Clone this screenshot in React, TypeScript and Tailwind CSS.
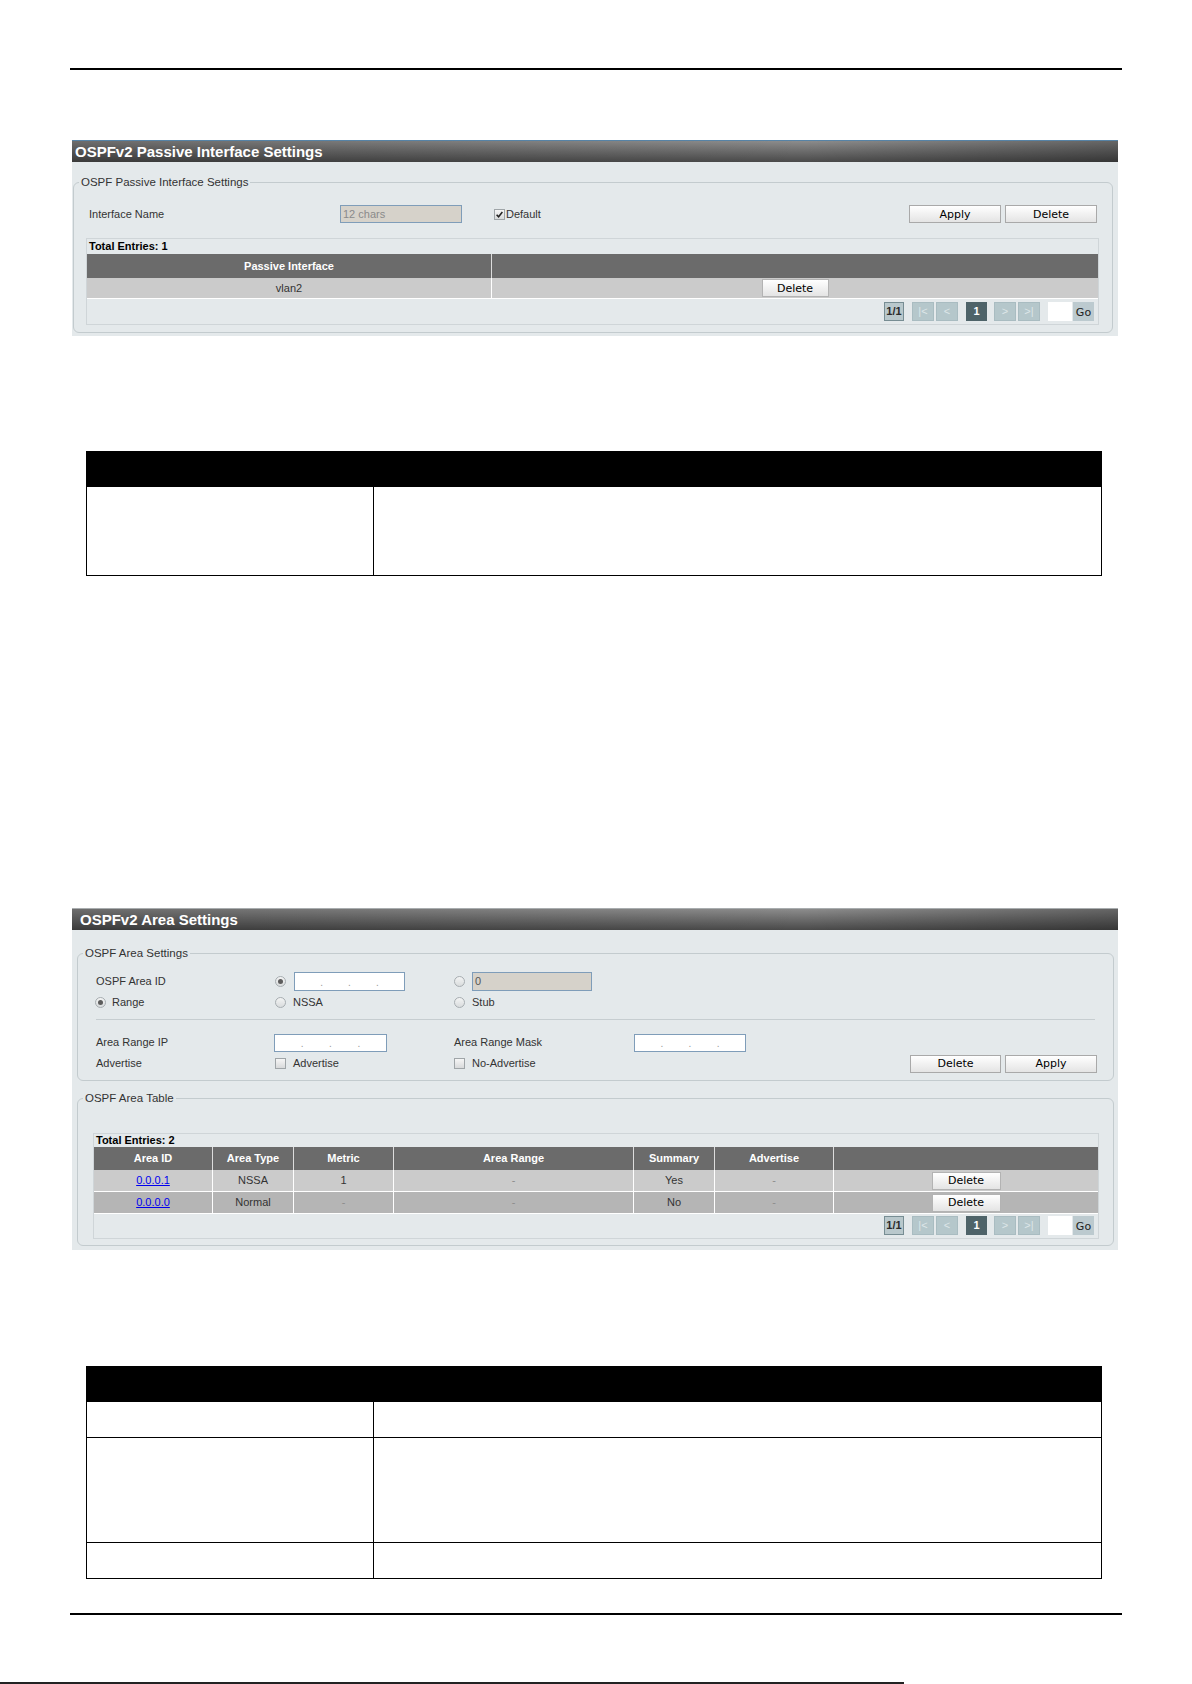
import React from 'react';
import clsx from 'clsx';

const PANEL_BG = 'bg-[#e4e9eb]';

function TitleBar({ title, accent, pad }: { title: string; accent: string; pad: string }) {
  return (
    <div
      className={clsx(
        'h-[22px] border-t text-[15px] font-bold leading-[21px] text-white',
        'bg-[linear-gradient(to_right,rgba(0,0,0,0.22),rgba(0,0,0,0.08)_45%,rgba(0,0,0,0)_70%,rgba(0,0,0,0.28)),linear-gradient(to_bottom,#8c8c8c,#4a4a4a)]',
        accent,
        pad
      )}
    >
      {title}
    </div>
  );
}

function Fieldset({
  legend,
  className,
  children,
}: {
  legend: string;
  className?: string;
  children: React.ReactNode;
}) {
  return (
    <div className={clsx('relative rounded-[6px] border border-[#c3cbce]', className)}>
      <span
        className={clsx(
          'absolute -top-[8px] left-[5px] px-[2px] text-[11.5px] leading-[14px] text-[#333]',
          PANEL_BG
        )}
      >
        {legend}
      </span>
      {children}
    </div>
  );
}

function Btn({ children, className }: { children: React.ReactNode; className?: string }) {
  return (
    <button
      type="button"
      className={clsx(
        "flex h-[18px] items-center justify-center border border-[#a9a9a9] bg-gradient-to-b from-white to-[#e4e4e4] font-['DejaVu_Sans',Verdana,sans-serif] text-[11px] leading-none text-black",
        className
      )}
    >
      {children}
    </button>
  );
}

function Radio({ checked }: { checked?: boolean }) {
  return (
    <span className="flex h-[11px] w-[11px] shrink-0 items-center justify-center rounded-full border border-[#a7adb1] bg-gradient-to-b from-[#f3f4f4] to-[#d9dcdd]">
      {checked && <span className="h-[5px] w-[5px] rounded-full bg-[#5c5c5c]" />}
    </span>
  );
}

function Check({ checked }: { checked?: boolean }) {
  return (
    <span className="flex h-[11px] w-[11px] shrink-0 items-center justify-center border border-[#9fa5a8] bg-gradient-to-b from-[#f6f6f6] to-[#d8dadb]">
      {checked && (
        <svg viewBox="0 0 10 10" className="h-[9px] w-[9px]">
          <path d="M1.8 5.2 L4 7.6 L8.2 2.2" stroke="#222" strokeWidth="1.7" fill="none" />
        </svg>
      )}
    </span>
  );
}

function IpInput({ className }: { className?: string }) {
  return (
    <div
      className={clsx(
        'flex items-center justify-evenly border border-[#7f9db9] bg-white pt-[3px] text-[10px] leading-none text-[#9a9a9a]',
        className
      )}
    >
      <span>.</span>
      <span>.</span>
      <span>.</span>
    </div>
  );
}

function Pager() {
  const cell = 'flex h-[19px] items-center justify-center text-[11px] leading-none';
  const off = 'border border-[#a9bcc1] bg-[#b5c7cb] text-[#dde6e8]';
  return (
    <div className="flex justify-end pr-[4px]">
      <span className={clsx(cell, 'w-[20px] border border-[#778d93] bg-[#b9c8cc] font-bold text-[#2b2b2b]')}>1/1</span>
      <span className={clsx(cell, off, 'ml-[8px] w-[22px]')}>|&lt;</span>
      <span className={clsx(cell, off, 'ml-[2px] w-[22px]')}>&lt;</span>
      <span className={clsx(cell, 'ml-[8px] w-[21px] bg-[#4e6369] font-bold text-white')}>1</span>
      <span className={clsx(cell, off, 'ml-[7px] w-[22px]')}>&gt;</span>
      <span className={clsx(cell, off, 'ml-[2px] w-[22px]')}>&gt;|</span>
      <span className={clsx(cell, 'ml-[8px] w-[24px] bg-white')} />
      <span
        className={clsx(
          cell,
          "ml-[1px] w-[21px] bg-[#bccacf] pt-[2px] font-['DejaVu_Sans',Verdana,sans-serif] text-[#222]"
        )}
      >
        Go
      </span>
    </div>
  );
}

function PassivePanel() {
  return (
    <div className={clsx('ml-[2px] w-[1046px] pb-[3px]', PANEL_BG)}>
      <TitleBar title="OSPFv2 Passive Interface Settings" accent="border-[#5683a6]" pad="pl-[3px]" />
      <div className="pl-[1px] pr-[5px]">
        <Fieldset
          legend="OSPF Passive Interface Settings"
          className="mt-[20px] pb-[7px] pl-[12px] pr-[13px] pt-[22px]"
        >
          <div className="flex h-[18px] items-center pl-[3px] pr-[2px] text-[11px] text-[#333]">
            <span className="w-[251px]">Interface Name</span>
            <div className="flex h-[18px] w-[122px] items-center border border-[#7f9db9] bg-[#d6d2ca] pl-[2px] text-[#8a8a8a]">
              12 chars
            </div>
            <span className="ml-[32px]">
              <Check checked />
            </span>
            <span className="ml-[1px]">Default</span>
            <Btn className="ml-auto w-[92px]">Apply</Btn>
            <Btn className="ml-[4px] w-[92px]">Delete</Btn>
          </div>

          <div className="mt-[15px] border border-[#cfd5d8] pb-[3px]">
            <div className="h-[15px] pl-[2px] text-[11px] font-bold leading-[15px] text-black">Total Entries: 1</div>
            <div className="flex h-[24px] bg-[#6b6b6b] text-[11px] font-bold text-white">
              <div className="flex w-[404px] items-center justify-center">Passive Interface</div>
              <div className="flex-1 border-l border-[#dcdcdc]" />
            </div>
            <div className="flex h-[21px] border-b border-white bg-[#cbcbcb] text-[11px] text-[#333]">
              <div className="flex w-[404px] items-center justify-center">vlan2</div>
              <div className="flex flex-1 items-center justify-center border-l border-white">
                <Btn className="h-[17px] w-[67px] border-[#b3b3b3]">Delete</Btn>
              </div>
            </div>
            <div className="mt-[3px]">
              <Pager />
            </div>
          </div>
        </Fieldset>
      </div>
    </div>
  );
}

const areaCols = [
  { label: 'Area ID', w: 'w-[118px]' },
  { label: 'Area Type', w: 'w-[81px]' },
  { label: 'Metric', w: 'w-[100px]' },
  { label: 'Area Range', w: 'w-[240px]' },
  { label: 'Summary', w: 'w-[81px]' },
  { label: 'Advertise', w: 'w-[119px]' },
  { label: '', w: 'flex-1' },
];

const areaRows = [
  { id: '0.0.0.1', type: 'NSSA', metric: '1', range: '-', summary: 'Yes', adv: '-', bg: 'bg-[#cbcbcb]' },
  { id: '0.0.0.0', type: 'Normal', metric: '-', range: '-', summary: 'No', adv: '-', bg: 'bg-[#b5b5b5]' },
];

function AreaPanel() {
  return (
    <div className={clsx('ml-[2px] w-[1046px] pb-[4px]', PANEL_BG)}>
      <TitleBar title="OSPFv2 Area Settings" accent="border-[#a9adaf]" pad="pl-[8px]" />

      <div className="pl-[5px] pr-[4px]">
        <Fieldset legend="OSPF Area Settings" className="mt-[23px] pb-[6px] pl-[18px] pr-[16px] pt-[17px]">
          <div className="grid grid-cols-[178px_180px_180px_1fr] text-[11px] text-[#333]">
            <div className="flex h-[21px] items-center">OSPF Area ID</div>
            <div className="flex h-[21px] items-center">
              <span className="ml-[1px]">
                <Radio checked />
              </span>
              <IpInput className="ml-[8px] h-[19px] w-[111px]" />
            </div>
            <div className="flex h-[21px] items-center">
              <Radio />
              <div className="ml-[7px] flex h-[19px] w-[120px] items-center border border-[#7f9db9] bg-[#d6d2ca] pl-[2px] text-[#555]">
                0
              </div>
            </div>
            <div />

            <div className="flex h-[20px] items-center">
              <span className="-ml-[1px]">
                <Radio checked />
              </span>
              <span className="ml-[6px]">Range</span>
            </div>
            <div className="flex h-[20px] items-center">
              <span className="ml-[1px]">
                <Radio />
              </span>
              <span className="ml-[7px]">NSSA</span>
            </div>
            <div className="flex h-[20px] items-center">
              <Radio />
              <span className="ml-[7px]">Stub</span>
            </div>
            <div />
          </div>

          <div className="mr-[2px] mt-[7px] h-px bg-[#c6cdd0]" />

          <div className="mt-[12px] grid grid-cols-[178px_180px_180px_1fr] text-[11px] text-[#333]">
            <div className="flex h-[21px] items-center">Area Range IP</div>
            <div className="flex h-[21px] items-center">
              <IpInput className="h-[18px] w-[113px]" />
            </div>
            <div className="flex h-[21px] items-center">Area Range Mask</div>
            <div className="flex h-[21px] items-center">
              <IpInput className="h-[18px] w-[112px]" />
            </div>

            <div className="flex h-[21px] items-center">Advertise</div>
            <div className="flex h-[21px] items-center">
              <span className="ml-[1px]">
                <Check />
              </span>
              <span className="ml-[7px]">Advertise</span>
            </div>
            <div className="flex h-[21px] items-center">
              <Check />
              <span className="ml-[7px]">No-Advertise</span>
            </div>
            <div className="flex h-[21px] items-center justify-end">
              <Btn className="w-[91px]">Delete</Btn>
              <Btn className="ml-[4px] w-[92px]">Apply</Btn>
            </div>
          </div>
        </Fieldset>

        <Fieldset legend="OSPF Area Table" className="mt-[17px] pb-[6px] pl-[15px] pr-[14px] pt-[34px]">
          <div className="border border-[#cfd5d8] pb-[3px]">
            <div className="h-[13px] pl-[2px] text-[11px] font-bold leading-[13px] text-black">Total Entries: 2</div>
            <div className="flex h-[23px] bg-[#6b6b6b] text-[11px] font-bold text-white">
              {areaCols.map((c, i) => (
                <div
                  key={i}
                  className={clsx('flex items-center justify-center', c.w, i > 0 && 'border-l border-[#dcdcdc]')}
                >
                  {c.label}
                </div>
              ))}
            </div>
            {areaRows.map((r) => {
              const vals = [r.type, r.metric, r.range, r.summary, r.adv];
              return (
                <div key={r.id} className={clsx('flex h-[22px] border-b border-white text-[11px] text-[#333]', r.bg)}>
                  <div className="flex w-[118px] items-center justify-center">
                    <a href="#" className="text-[#0000ee] underline">
                      {r.id}
                    </a>
                  </div>
                  {vals.map((v, i) => (
                    <div
                      key={i}
                      className={clsx(
                        'flex items-center justify-center border-l border-white',
                        areaCols[i + 1].w,
                        v === '-' && 'text-[#8d8d8d]'
                      )}
                    >
                      {v}
                    </div>
                  ))}
                  <div className="flex flex-1 items-center justify-center border-l border-white">
                    <Btn className="h-[17px] w-[69px] border-[#b3b3b3]">Delete</Btn>
                  </div>
                </div>
              );
            })}
            <div className="mt-[2px]">
              <Pager />
            </div>
          </div>
        </Fieldset>
      </div>
    </div>
  );
}

function DocTable({ rows }: { rows: string[] }) {
  return (
    <div className="ml-[16px] w-[1016px] border border-black">
      <div className="h-[35px] bg-black" />
      {rows.map((h, i) => (
        <div key={i} className={clsx('flex', h, i < rows.length - 1 && 'border-b border-black')}>
          <div className="w-[287px] border-r border-black" />
          <div className="flex-1" />
        </div>
      ))}
    </div>
  );
}

export default function App() {
  return (
    <div className="relative h-[1684px] w-[1192px] overflow-hidden bg-white pt-[68px] font-['Liberation_Sans',Arial,sans-serif]">
      <div className="ml-[70px] w-[1052px]">
        <div className="h-[2px] bg-black" />

        <div className="mt-[70px]">
          <PassivePanel />
        </div>

        <div className="mt-[115px]">
          <DocTable rows={['h-[88px]']} />
        </div>

        <div className="mt-[332px]">
          <AreaPanel />
        </div>

        <div className="mt-[116px]">
          <DocTable rows={['h-[36px]', 'h-[105px]', 'h-[35px]']} />
        </div>

        <div className="mt-[34px] h-[2px] bg-black" />
      </div>
      <div className="mt-[67px] h-[2px] w-[904px] bg-[#222]" />
    </div>
  );
}
